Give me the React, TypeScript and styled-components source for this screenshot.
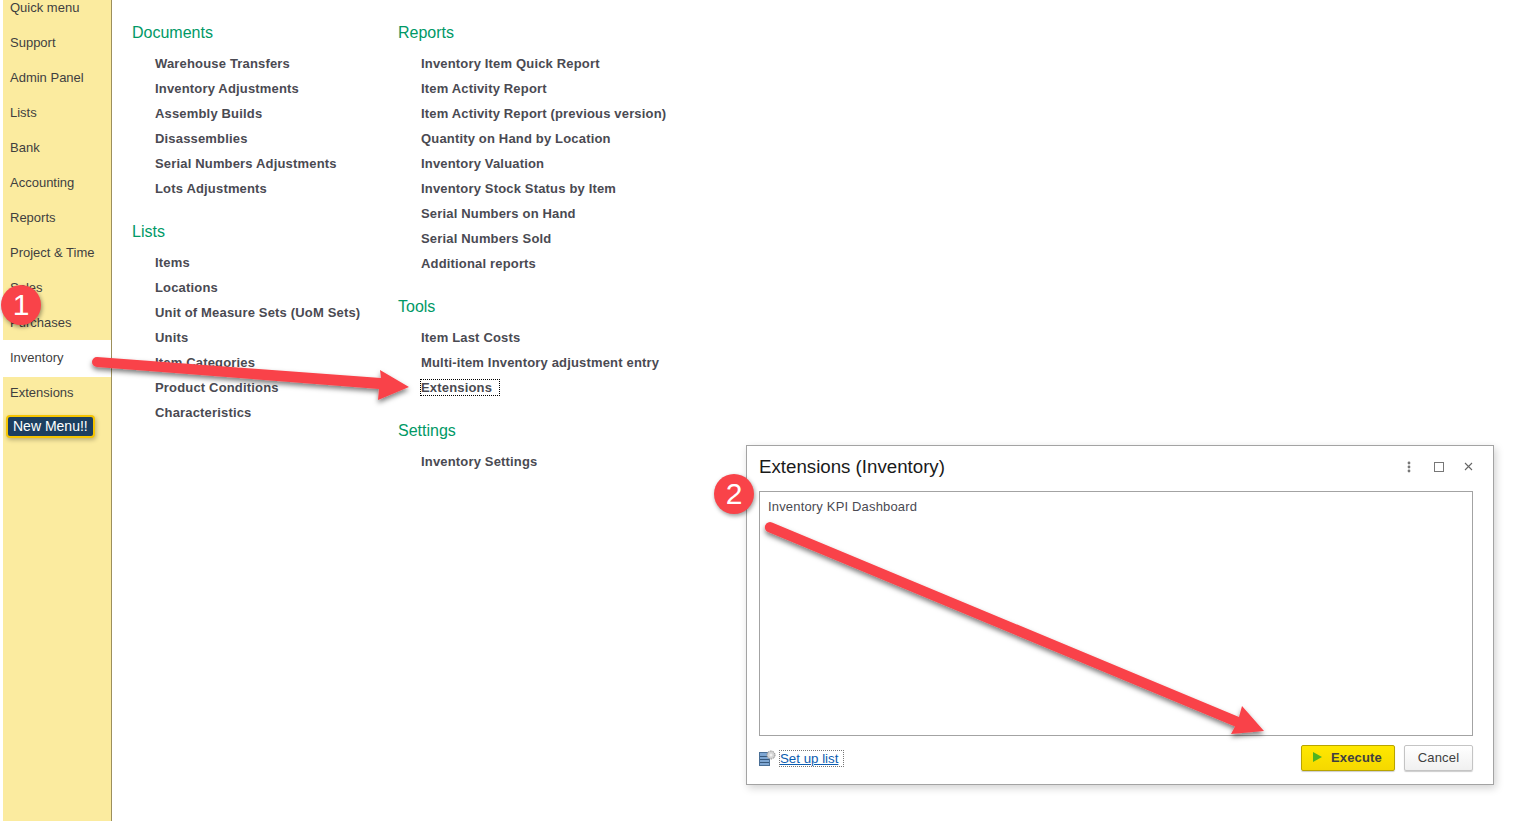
import styled, { createGlobalStyle } from "styled-components";

const GlobalStyle = createGlobalStyle`
    html, body {
        margin: 0;
        height: 100%;
        background: #fff;
        overflow: hidden;
    }
    body {
        font-family: "Liberation Sans", Arial, sans-serif;
    }
`;

const Page = styled.div`
    display: flex;
    height: 821px;
    padding-left: 3px;
    overflow: hidden;
`;

const Sidebar = styled.aside`
    width: 108px;
    flex-shrink: 0;
    background: #fbeb9f;
    border-right: 1px solid #9c8f5c;
    overflow: hidden;
`;

const SideList = styled.ul`
    list-style: none;
    margin: -10px 0 0;
    padding: 0;
`;

const SideItem = styled.li<{ $active?: boolean }>`
    box-sizing: border-box;
    height: ${(p) => (p.$active ? "37px" : "35px")};
    margin-bottom: ${(p) => (p.$active ? "-2px" : "0")};
    padding: ${(p) => (p.$active ? "0 0 2px 7px" : "0 0 0 7px")};
    display: flex;
    align-items: center;
    font-size: 13px;
    color: #3f3f3f;
    background: ${(p) => (p.$active ? "#fff" : "transparent")};
`;

const NewMenu = styled.span`
    display: inline-block;
    margin: 5px 0 0 3px;
    padding: 0 5px;
    height: 19px;
    line-height: 19px;
    background: #1c3f60;
    border: 2px solid #f5c400;
    border-radius: 4px;
    color: #fff;
    font-size: 14px;
    white-space: nowrap;
    box-shadow: 1px 2px 4px rgba(0, 0, 0, 0.25);
`;

const Main = styled.main`
    display: flex;
    padding: 21px 0 0 20px;
`;

const Column = styled.div`
    width: 266px;
`;

const Section = styled.section`
    margin-bottom: 19px;
`;

const Heading = styled.h3`
    margin: 0 0 6px;
    font-size: 16px;
    font-weight: 400;
    line-height: 24px;
    color: #009966;
`;

const Links = styled.ul`
    list-style: none;
    margin: 0;
    padding: 0 0 0 23px;
`;

const LinkItem = styled.li`
    height: 25px;
    line-height: 25px;
    font-size: 13px;
    font-weight: 700;
    letter-spacing: 0.17px;
    color: #4a4a52;
    white-space: nowrap;
`;

const Focused = styled.span`
    display: inline-block;
    line-height: 15px;
    padding-right: 7px;
    outline: 1px dotted #000;
`;

const Dialog = styled.div`
    position: absolute;
    left: 746px;
    top: 445px;
    width: 748px;
    height: 340px;
    box-sizing: border-box;
    padding: 0 20px 0 12px;
    display: flex;
    flex-direction: column;
    background: #fff;
    border: 1px solid #a3a3a3;
    box-shadow: 2px 3px 8px rgba(0, 0, 0, 0.18);
`;

const DialogHeader = styled.header`
    height: 45px;
    box-sizing: border-box;
    padding-bottom: 4px;
    flex-shrink: 0;
    display: flex;
    align-items: center;
    justify-content: space-between;
`;

const DialogTitle = styled.h2`
    margin: 0;
    font-size: 18.7px;
    font-weight: 400;
    color: #1a1a1a;
`;

const WindowTools = styled.div`
    display: flex;
    align-items: center;
    gap: 20px;
`;

const KebabIcon = styled.svg`
    margin-right: 3px;
`;

const ListBox = styled.div`
    height: 245px;
    flex-shrink: 0;
    box-sizing: border-box;
    padding: 6px 8px;
    border: 1px solid #a3a3a3;
    font-size: 13px;
    line-height: 18px;
    letter-spacing: 0.17px;
    color: #4a4a52;
`;

const DialogFooter = styled.footer`
    display: flex;
    align-items: center;
    justify-content: space-between;
    padding-top: 9px;
`;

const SetupLink = styled.div`
    display: flex;
    align-items: center;
    gap: 4px;
`;

const SetupText = styled.a`
    display: inline-block;
    padding-right: 5px;
    line-height: 15px;
    font-size: 13.3px;
    color: #0b5cb0;
    text-decoration: underline;
    outline: 1px dotted #777;
`;

const Buttons = styled.div`
    display: flex;
    gap: 9px;
`;

const Button = styled.button<{ $primary?: boolean }>`
    height: 26px;
    box-sizing: border-box;
    display: flex;
    align-items: center;
    justify-content: center;
    gap: 9px;
    padding: ${(p) => (p.$primary ? "0 1px 2px 0" : "0 0 2px")};
    width: ${(p) => (p.$primary ? "94px" : "69px")};
    border-radius: 2px;
    border: 1px solid ${(p) => (p.$primary ? "#b8a400" : "#c4c4c4")};
    background: ${(p) =>
        p.$primary
            ? "linear-gradient(#ffe800, #f5d800)"
            : "linear-gradient(#fff, #f0f0f0)"};
    box-shadow: 0 1px 1px rgba(0, 0, 0, 0.2);
    font-family: inherit;
    font-size: 13px;
    font-weight: ${(p) => (p.$primary ? 700 : 400)};
    letter-spacing: 0.17px;
    color: #404040;
`;

const Overlay = styled.svg`
    position: absolute;
    left: 0;
    top: 0;
    width: 1527px;
    height: 821px;
    pointer-events: none;
`;

const StepBadge = styled.div<{ $x: number; $y: number }>`
    position: absolute;
    left: ${(p) => p.$x}px;
    top: ${(p) => p.$y}px;
    width: 40px;
    height: 40px;
    border-radius: 50%;
    background: #f94349;
    box-shadow: 1px 2px 4px rgba(0, 0, 0, 0.4);
    color: #fff;
    font-size: 30px;
    line-height: 40px;
    text-align: center;
`;

const sideItems = [
    "Quick menu",
    "Support",
    "Admin Panel",
    "Lists",
    "Bank",
    "Accounting",
    "Reports",
    "Project & Time",
    "Sales",
    "Purchases",
];

const leftColumn = [
    {
        title: "Documents",
        items: [
            "Warehouse Transfers",
            "Inventory Adjustments",
            "Assembly Builds",
            "Disassemblies",
            "Serial Numbers Adjustments",
            "Lots Adjustments",
        ],
    },
    {
        title: "Lists",
        items: [
            "Items",
            "Locations",
            "Unit of Measure Sets (UoM Sets)",
            "Units",
            "Item Categories",
            "Product Conditions",
            "Characteristics",
        ],
    },
];

const rightColumn = [
    {
        title: "Reports",
        items: [
            "Inventory Item Quick Report",
            "Item Activity Report",
            "Item Activity Report (previous version)",
            "Quantity on Hand by Location",
            "Inventory Valuation",
            "Inventory Stock Status by Item",
            "Serial Numbers on Hand",
            "Serial Numbers Sold",
            "Additional reports",
        ],
    },
    {
        title: "Tools",
        items: ["Item Last Costs", "Multi-item Inventory adjustment entry", "Extensions"],
    },
    {
        title: "Settings",
        items: ["Inventory Settings"],
    },
];

function MenuColumn({ sections }: { sections: { title: string; items: string[] }[] }) {
    return (
        <Column>
            {sections.map((section) => (
                <Section key={section.title}>
                    <Heading>{section.title}</Heading>
                    <Links>
                        {section.items.map((item) => (
                            <LinkItem key={item}>
                                {item === "Extensions" ? <Focused>{item}</Focused> : item}
                            </LinkItem>
                        ))}
                    </Links>
                </Section>
            ))}
        </Column>
    );
}

function SetupIcon() {
    return (
        <svg width="17" height="16" viewBox="0 0 17 16">
            <rect x="0.5" y="2.5" width="10" height="13" fill="#7ea6d2" stroke="#4a6f96" />
            <path d="M1 6.5h9M1 9.5h9M1 12.5h9" stroke="#38597c" />
            <circle cx="12" cy="5" r="4" fill="#d4d4d4" stroke="#8c8c8c" strokeDasharray="1.5 1" />
            <circle cx="12" cy="5" r="1.5" fill="#f2f2f2" />
        </svg>
    );
}

function App() {
    return (
        <>
            <GlobalStyle />
            <Page>
                <Sidebar>
                    <SideList>
                        {sideItems.map((item) => (
                            <SideItem key={item}>{item}</SideItem>
                        ))}
                        <SideItem $active>Inventory</SideItem>
                        <SideItem>Extensions</SideItem>
                    </SideList>
                    <NewMenu>New Menu!!</NewMenu>
                </Sidebar>
                <Main>
                    <MenuColumn sections={leftColumn} />
                    <MenuColumn sections={rightColumn} />
                </Main>
            </Page>

            <Dialog>
                <DialogHeader>
                    <DialogTitle>Extensions (Inventory)</DialogTitle>
                    <WindowTools>
                        <KebabIcon width="4" height="12" viewBox="0 0 4 12" fill="#777">
                            <circle cx="2" cy="2" r="1.4" />
                            <circle cx="2" cy="6" r="1.4" />
                            <circle cx="2" cy="10" r="1.4" />
                        </KebabIcon>
                        <svg width="10" height="10" viewBox="0 0 10 10" fill="none" stroke="#777">
                            <rect x="0.5" y="0.5" width="9" height="9" />
                        </svg>
                        <svg width="9" height="9" viewBox="0 0 9 9" stroke="#666" strokeWidth="1.1">
                            <path d="M1 1l7 7M8 1l-7 7" />
                        </svg>
                    </WindowTools>
                </DialogHeader>
                <ListBox>Inventory KPI Dashboard</ListBox>
                <DialogFooter>
                    <SetupLink>
                        <SetupIcon />
                        <SetupText>Set up list</SetupText>
                    </SetupLink>
                    <Buttons>
                        <Button $primary>
                            <svg width="9" height="10" viewBox="0 0 9 10" fill="#4fb31f">
                                <path d="M0 0l9 5L0 10z" />
                            </svg>
                            Execute
                        </Button>
                        <Button>Cancel</Button>
                    </Buttons>
                </DialogFooter>
            </Dialog>

            <Overlay viewBox="0 0 1527 821">
                <defs>
                    <filter id="arrowShadow" x="-10%" y="-30%" width="120%" height="160%">
                        <feDropShadow dx="0" dy="3" stdDeviation="2.5" floodColor="#000" floodOpacity="0.5" />
                    </filter>
                </defs>
                <g fill="#f94349" filter="url(#arrowShadow)">
                    <path d="M97 357 L381 378 L380 370 L409 387 L378 400 L379 389 L97 367 A5 5 0 0 1 97 357Z" />
                    <path d="M772 522.5 L1239 717 L1242 706 L1264 731 L1231 734 L1235 726.5 L768 532 A5 5 0 0 1 772 522.5Z" />
                </g>
            </Overlay>
            <StepBadge $x={1} $y={285}>1</StepBadge>
            <StepBadge $x={714} $y={474}>2</StepBadge>
        </>
    );
}

export default App;
